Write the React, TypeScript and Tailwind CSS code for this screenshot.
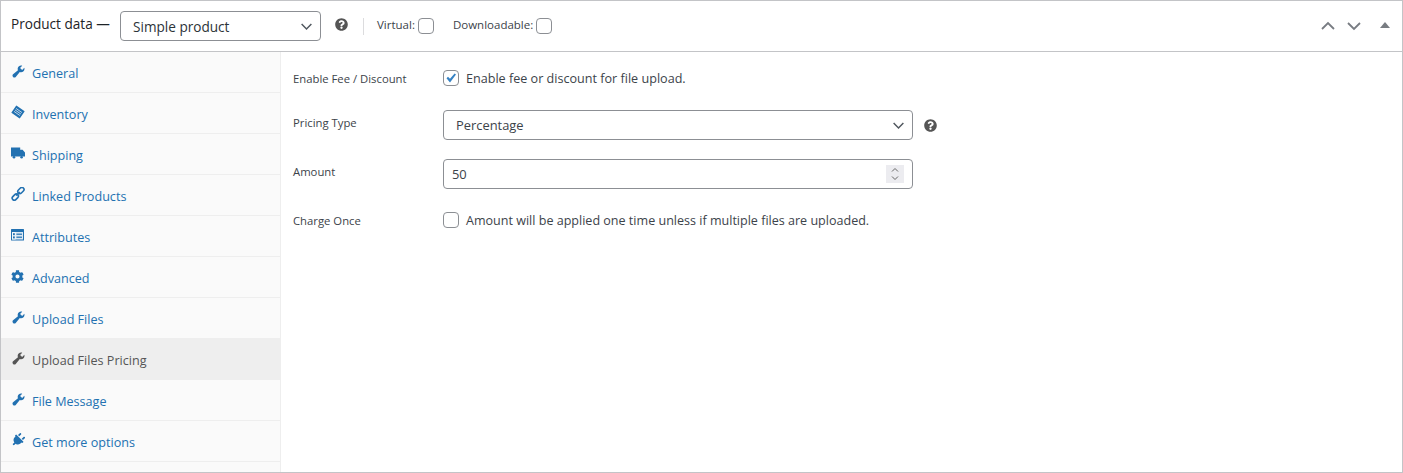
import React from "react";
import { FaCog, FaPlug, FaQuestionCircle } from "react-icons/fa";

const Wrench = () => (
  <svg viewBox="0 0 20 20" className="w-[15px] h-[15px] fill-current">
    <path d="M16.68 9.77c-1.34 1.34-3.3 1.67-4.95.99l-5.41 6.52c-.99.99-2.59.99-3.58 0s-.99-2.59 0-3.57l6.52-5.42c-.68-1.65-.35-3.61.99-4.95 1.28-1.28 3.12-1.62 4.72-1.06l-2.89 2.89 2.82 2.82 2.86-2.87c.53 1.58.18 3.39-1.08 4.65z" />
  </svg>
);

const Tag = () => (
  <svg viewBox="0 0 14 14" className="w-[14px] h-[14px]">
    <g transform="rotate(35 7 7)">
      <rect x="1.8" y="2.6" width="10.4" height="8.8" rx="0.6" className="fill-current" />
      <path d="M3.4 5.2h7.2M3.4 7h7.2M3.4 8.8h7.2" stroke="#cfe0ef" strokeWidth="0.8" />
    </g>
  </svg>
);

const Truck = () => (
  <svg viewBox="0 0 14 12" className="w-[14px] h-[12px] fill-current">
    <path d="M0 .5h9.2v2.2h2.4L14 5.4v4.2H0z" />
    <circle cx="3" cy="10.2" r="1.3" />
    <circle cx="10.6" cy="10.2" r="1.3" />
  </svg>
);

const Chain = () => (
  <svg viewBox="0 0 14 14" className="w-[14px] h-[14px]" fill="none" stroke="currentColor" strokeWidth="1.6">
    <rect x="6.4" y="1.4" width="7" height="4.2" rx="2.1" transform="rotate(-45 9.9 3.5)" />
    <rect x="0.8" y="8" width="7" height="4.2" rx="2.1" transform="rotate(-45 4.3 10.1)" />
    <path d="M5.2 8.6 8.8 5" />
  </svg>
);

const Card = () => (
  <svg viewBox="0 0 13 12" className="w-[13px] h-[12px]">
    <rect width="13" height="11.5" rx="0.5" className="fill-current" />
    <rect x="1" y="3" width="11" height="7.5" fill="#dbe8f3" />
    <rect x="1" y="3" width="3.6" height="7.5" fill="#f4f8fb" />
    <rect x="2" y="4.2" width="1.8" height="2" className="fill-current" />
    <rect x="2" y="7.4" width="1.8" height="2" className="fill-current" />
    <rect x="5.4" y="4.6" width="5.6" height="1.2" className="fill-current" />
    <rect x="5.4" y="7.6" width="5.6" height="1.2" className="fill-current" />
  </svg>
);

const Chevron = ({ up = false, size = 16, width = 2 }: { up?: boolean; size?: number; width?: number }) => (
  <svg viewBox="0 0 16 16" width={size} height={size} className={up ? "rotate-180" : ""} fill="none">
    <path d="M2 5l6 6 6-6" stroke="currentColor" strokeWidth={width} />
  </svg>
);

const tabs = [
  { label: "General", icon: <Wrench /> },
  { label: "Inventory", icon: <Tag /> },
  { label: "Shipping", icon: <Truck /> },
  { label: "Linked Products", icon: <Chain /> },
  { label: "Attributes", icon: <Card /> },
  { label: "Advanced", icon: <FaCog className="w-[13px] h-[13px]" /> },
  { label: "Upload Files", icon: <Wrench /> },
  { label: "Upload Files Pricing", icon: <Wrench />, active: true },
  { label: "File Message", icon: <Wrench /> },
  { label: "Get more options", icon: <FaPlug className="w-[14px] h-[14px] rotate-45" /> },
];

const Help = () => <FaQuestionCircle className="w-[13px] h-[13px] text-[#555]" />;

const Box = ({ checked = false }: { checked?: boolean }) => (
  <span className="w-4 h-4 rounded-[4px] border border-[#8c8f94] bg-white flex items-center justify-center shrink-0">
    {checked && (
      <svg viewBox="0 0 12 12" className="w-3 h-3 fill-[#3582c4]">
        <path d="M1.5 6.2 3 4.8l2 2L9.6 1.4 11 2.6 5 10.6z" />
      </svg>
    )}
  </span>
);

const Row = ({
  label,
  className,
  labelClass,
  children,
}: {
  label: string;
  className: string;
  labelClass: string;
  children: React.ReactNode;
}) => (
  <div className={`flex items-center h-[30px] ${className}`}>
    <span className={`w-[150px] text-[11.3px] text-[#3c434a] ${labelClass}`}>{label}</span>
    {children}
  </div>
);

export default function App() {
  return (
    <div className="w-[1403px] h-[473px] bg-white border border-[#c3c4c7] flex flex-col text-[#3c434a] font-['Open_Sans',sans-serif] overflow-hidden">
      <div className="h-[51px] shrink-0 border-b border-[#c3c4c7] flex items-center pl-[10px] pr-[12px]">
        <span className="text-[13.6px] text-[#1d2327] w-[109px] -mt-[3px]">Product data —</span>
        <div className="w-[201px] h-[30px] rounded-[4px] border border-[#8c8f94] flex items-center justify-between pl-3 pr-[7px] text-[13.6px] text-[#2c3338]">
          <span className="pt-[2px]">Simple product</span>
          <span className="text-[#50575e]"><Chevron size={13} width={1.8} /></span>
        </div>
        <span className="ml-[14px] -mt-[3px]"><Help /></span>
        <span className="w-px h-[17px] bg-[#dcdcde] ml-[15px]" />
        <span className="ml-[13px] text-[11.5px] -mt-[3px]">Virtual:</span>
        <span className="ml-[3px]"><Box /></span>
        <span className="ml-[19px] text-[11.5px] -mt-[3px]">Downloadable:</span>
        <span className="ml-[3px]"><Box /></span>
        <div className="ml-auto flex items-center text-[#787c82]">
          <Chevron up size={16} width={1.8} />
          <span className="ml-[10px]"><Chevron size={16} width={1.8} /></span>
          <span className="ml-[18px] -mt-[3px] w-0 h-0 border-x-[5px] border-x-transparent border-b-[6px] border-b-[#787c82]" />
        </div>
      </div>
      <div className="flex flex-1 min-h-0">
        <ul className="w-[280px] shrink-0 bg-[#fafafa] border-r border-[#eee]">
          {tabs.map((t) => (
            <li
              key={t.label}
              className={`h-[41px] flex items-center border-b border-[#eee] text-[12.6px] ${
                t.active ? "bg-[#eee] text-[#555]" : "text-[#2271b1]"
              }`}
            >
              <span className="w-[30px] pl-[10px] -mt-[2px] flex justify-start">{t.icon}</span>
              <span className="pl-px pt-[4px]">{t.label}</span>
            </li>
          ))}
        </ul>
        <div className="flex-1 pl-3 pt-[11px]">
          <Row label="Enable Fee / Discount" className="" labelClass="pt-[2px]">
            <Box checked />
            <span className="ml-[7px] text-[12.6px] pt-[2px]">Enable fee or discount for file upload.</span>
          </Row>
          <Row label="Pricing Type" className="mt-[17px]" labelClass="pb-[4px]">
            <div className="w-[470px] h-[30px] rounded-[4px] border border-[#8c8f94] flex items-center justify-between pl-3 pr-[7px] text-[12.9px]">
              <span className="pt-[2px]">Percentage</span>
              <span className="text-[#50575e]"><Chevron size={13} width={1.8} /></span>
            </div>
            <span className="ml-[11px]"><Help /></span>
          </Row>
          <Row label="Amount" className="mt-[19px]" labelClass="pb-[4px]">
            <div className="w-[470px] h-[30px] rounded-[4px] border border-[#8c8f94] flex items-center justify-between pl-2 pr-2 text-[12.9px]">
              <span className="pt-[2px]">50</span>
              <span className="w-[18px] h-[18px] bg-[#ececf0] flex flex-col items-center justify-center text-[#666]">
                <Chevron up size={8} />
                <Chevron size={8} />
              </span>
            </div>
          </Row>
          <Row label="Charge Once" className="mt-[16px]" labelClass="pt-[2px]">
            <Box />
            <span className="ml-[7px] text-[12.56px] pt-[2px]">Amount will be applied one time unless if multiple files are uploaded.</span>
          </Row>
        </div>
      </div>
    </div>
  );
}
